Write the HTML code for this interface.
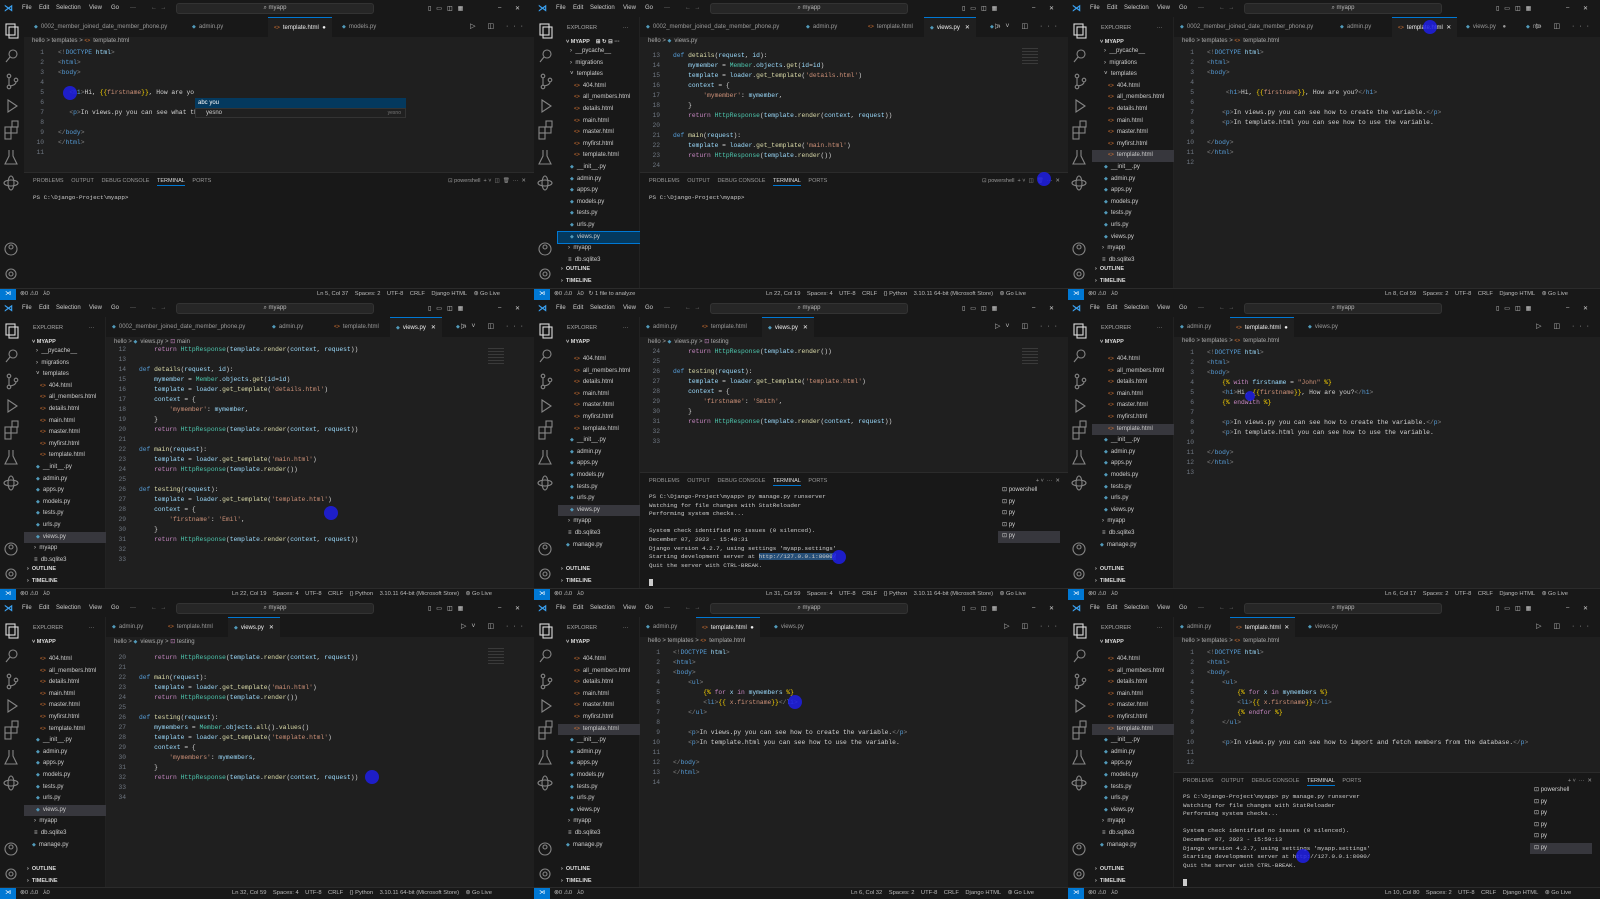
<!DOCTYPE html>
<html><head><meta charset="utf-8">
<style>
*{margin:0;padding:0;box-sizing:border-box}
body{width:1600px;height:899px;background:#111;overflow:hidden;font-family:"Liberation Sans",sans-serif;color:#ccc;position:relative}
.p{position:absolute;overflow:hidden;background:#1f1f1f;width:534px;height:300px}
.tb{position:absolute;left:0;top:0;right:0;height:17px;background:#181818;font-size:6px;color:#ccc}
.tb span{position:absolute;top:5px}
.lg{left:4px;color:#3aa0f0;font-size:9px;top:3px!important;font-weight:bold}
.sr{position:absolute;left:176px;width:198px;top:3px;height:11px;background:#262626;border:1px solid #333;border-radius:3px;text-align:center;font-size:6px;line-height:9px;color:#bbb}
.ab{position:absolute;left:0;top:17px;width:24px;bottom:12px;background:#181818}
.ex{position:absolute;left:24px;top:17px;width:82px;bottom:12px;background:#181818;font-size:6px;color:#ccc;border-right:1px solid #222}
.ex .h{position:absolute;left:9px;top:8px;font-size:5.5px;color:#aaa}
.ex .m{position:absolute;left:8px;top:22px;font-size:5.5px;font-weight:bold;color:#ddd}
.ex .ol{position:absolute;left:3px;font-size:5.5px;font-weight:bold;color:#ddd}
.el{position:absolute;left:0;width:82px}
.el div{height:11.6px;line-height:11.6px;white-space:nowrap;font-size:6px}
.el .sel{background:#37373d}
.el .selb{background:#04395e;outline:1px solid #0078d4}
.hi{color:#e37933;font-size:5px;margin-right:3px}
.py{color:#519aba;font-size:5px;margin-right:3px}
.tabs{position:absolute;top:17px;right:0;height:20px;background:#181818;font-size:6px;color:#999;white-space:nowrap}
.tab{position:absolute;top:0;height:20px;line-height:20px;padding:0 6px}
.tab.act{background:#1f1f1f;color:#eee;border-top:1px solid #0078d4}
.bc{position:absolute;top:38px;font-size:6px;color:#aaa;white-space:nowrap}
pre{font-family:"Liberation Mono",monospace;font-size:6.3px;line-height:10px;position:absolute;white-space:pre;color:#d4d4d4}
pre.n{color:#6e7681;text-align:right;width:20px}
.k{color:#569cd6}.f{color:#dcdcaa}.s{color:#ce9178}.v{color:#9cdcfe}.c{color:#4ec9b0}.g{color:#808080}.y{color:#ffd700}.q{color:#c586c0}
.term{position:absolute;right:0;top:172px;bottom:12px;background:#181818;border-top:1px solid #2b2b2b}
.tt{position:absolute;top:5px;font-size:5.5px;color:#999;white-space:nowrap}
.tt b{font-weight:normal;color:#ddd;border-bottom:1px solid #0078d4;padding-bottom:1px}
pre.tm{font-size:5.9px;line-height:8.6px;color:#ccc}
.tl{position:absolute;right:8px;font-size:6px;color:#ccc;width:62px}
.tl div{height:11.5px;line-height:11.5px;padding-left:4px}
.st{position:absolute;left:0;right:0;bottom:0;height:12px;background:#181818;border-top:1px solid #2b2b2b;font-size:5.8px;color:#bbb;white-space:nowrap}
.st span{position:absolute;top:2px}
.st .rm{left:0;top:0;width:16px;height:12px;background:#0078d4;color:#fff;text-align:center;line-height:11px}
.dot{position:absolute;width:14px;height:14px;border-radius:50%;background:rgba(30,30,230,.85)}
.mini{position:absolute;width:16px;height:18px;background:repeating-linear-gradient(#555 0 1px,transparent 1px 3px);opacity:.5}
.rt{position:absolute;top:5px;right:6px;font-size:7px;color:#bbb;letter-spacing:5px}
</style></head><body>

<!-- ===== PANEL 1 ===== -->
<div class="p" style="left:0;top:0">
 <div class="tb"><span class="lg">⋊</span><span style="left:22px">File</span><span style="left:39px">Edit</span><span style="left:56px">Selection</span><span style="left:89px">View</span><span style="left:111px">Go</span><span style="left:130px">···</span><span style="left:151px;color:#777">←&nbsp; →</span><div class="sr">⌕ myapp</div><span style="left:428px;letter-spacing:5px">▯▭◫▦</span><span style="left:498px">–</span><span style="left:515px">✕</span></div>
 <div class="ab"><svg width="24" height="271" fill="none" stroke="#858585" stroke-width="1.1"><rect x="6" y="7" width="9" height="11" stroke="#ddd"/><rect x="9" y="10" width="9" height="11" stroke="#ddd"/><circle cx="13" cy="37" r="4"/><path d="M10 40 L6 45"/><circle cx="9" cy="59" r="1.8"/><circle cx="9" cy="70" r="1.8"/><circle cx="16" cy="63" r="1.8"/><path d="M9 61V68M16 65Q16 68 10 69"/><path d="M8 83 L17 89 L8 95Z"/><rect x="5" y="110" width="6" height="6"/><rect x="11" y="110" width="6" height="6"/><rect x="5" y="116" width="6" height="6"/><rect x="12" y="104" width="6" height="6"/><path d="M9 133 V139 L5 147 H17 L13 139 V133"/><ellipse cx="11" cy="166" rx="7" ry="3"/><ellipse cx="11" cy="166" rx="3" ry="7"/><circle cx="11" cy="232" r="6"/><circle cx="11" cy="230" r="2"/><circle cx="11" cy="257" r="5"/><circle cx="11" cy="257" r="2"/></svg></div>
 <div class="tabs" style="left:24px"><div class="tab" style="left:4px"><span class="py">◆</span>0002_member_joined_date_member_phone.py</div><div class="tab" style="left:162px"><span class="py">◆</span>admin.py</div><div class="tab act" style="left:244px"><span class="hi">&lt;&gt;</span>template.html&nbsp; ●</div><div class="tab" style="left:312px"><span class="py">◆</span>models.py</div><div class="rt">▷ ◫ ···</div></div>
 <div class="bc" style="left:32px">hello &gt; templates &gt; <span class="hi">&lt;&gt;</span>template.html</div>
 <pre class="n" style="left:24px;top:48px">1
2
3
4
5
6
7
8
9
10
11</pre>
 <pre style="left:58px;top:48px"><span class="g">&lt;!</span><span class="k">DOCTYPE</span> <span class="v">html</span><span class="g">&gt;</span>
<span class="g">&lt;</span><span class="k">html</span><span class="g">&gt;</span>
<span class="g">&lt;</span><span class="k">body</span><span class="g">&gt;</span>

   <span class="g">&lt;</span><span class="k">h1</span><span class="g">&gt;</span>Hi, <span class="y">{{</span><span class="s">firstname</span><span class="y">}}</span>, How are yo

   <span class="g">&lt;</span><span class="k">p</span><span class="g">&gt;</span>In views.py you can see what th

<span class="g">&lt;/</span><span class="k">body</span><span class="g">&gt;</span>
<span class="g">&lt;/</span><span class="k">html</span><span class="g">&gt;</span></pre>
 <div style="position:absolute;left:195px;top:98px;width:211px;height:10px;background:#04395e;font-size:6px;line-height:10px;padding-left:3px;color:#fff">abc you</div>
 <div style="position:absolute;left:195px;top:108px;width:211px;height:10px;background:#202020;border:1px solid #333;font-size:6px;line-height:8px;padding-left:10px;color:#ccc">yesno<span style="position:absolute;right:4px;color:#777;font-size:5px">yesno</span></div>
 <div class="dot" style="left:63px;top:86px"></div>
 <div class="term" style="left:24px">
  <div class="tt" style="left:9px">PROBLEMS&nbsp;&nbsp;&nbsp;&nbsp; OUTPUT&nbsp;&nbsp;&nbsp;&nbsp; DEBUG CONSOLE&nbsp;&nbsp;&nbsp;&nbsp; <b>TERMINAL</b>&nbsp;&nbsp;&nbsp;&nbsp; PORTS</div>
  <div class="tt" style="right:8px">⊡ powershell&nbsp; + ˅&nbsp; ◫&nbsp; 🗑&nbsp; ···&nbsp; ✕</div>
  <pre class="tm" style="left:9px;top:21px">PS C:\Django-Project\myapp&gt;</pre>
 </div>
 <div class="st"><span class="rm">⋊</span><span style="left:20px">⊗0 ⚠0&nbsp;&nbsp; ⅄0</span><span style="left:317px">Ln 5, Col 37&nbsp;&nbsp;&nbsp; Spaces: 2&nbsp;&nbsp;&nbsp; UTF-8&nbsp;&nbsp;&nbsp; CRLF&nbsp;&nbsp;&nbsp; Django HTML&nbsp;&nbsp;&nbsp; ⊛ Go Live</span></div>
</div>

<!-- ===== PANEL 2 ===== -->
<div class="p" style="left:534px;top:0">
 <div class="tb"><span class="lg">⋊</span><span style="left:22px">File</span><span style="left:39px">Edit</span><span style="left:56px">Selection</span><span style="left:89px">View</span><span style="left:111px">Go</span><span style="left:130px">···</span><span style="left:151px;color:#777">←&nbsp; →</span><div class="sr">⌕ myapp</div><span style="left:428px;letter-spacing:5px">▯▭◫▦</span><span style="left:498px">–</span><span style="left:515px">✕</span></div>
 <div class="ab"><svg width="24" height="271" fill="none" stroke="#858585" stroke-width="1.1"><rect x="6" y="7" width="9" height="11" stroke="#ddd"/><rect x="9" y="10" width="9" height="11" stroke="#ddd"/><circle cx="13" cy="37" r="4"/><path d="M10 40 L6 45"/><circle cx="9" cy="59" r="1.8"/><circle cx="9" cy="70" r="1.8"/><circle cx="16" cy="63" r="1.8"/><path d="M9 61V68M16 65Q16 68 10 69"/><path d="M8 83 L17 89 L8 95Z"/><rect x="5" y="110" width="6" height="6"/><rect x="11" y="110" width="6" height="6"/><rect x="5" y="116" width="6" height="6"/><rect x="12" y="104" width="6" height="6"/><path d="M9 133 V139 L5 147 H17 L13 139 V133"/><ellipse cx="11" cy="166" rx="7" ry="3"/><ellipse cx="11" cy="166" rx="3" ry="7"/><circle cx="11" cy="232" r="6"/><circle cx="11" cy="230" r="2"/><circle cx="11" cy="257" r="5"/><circle cx="11" cy="257" r="2"/></svg></div>
 <div class="ex"><div class="h">EXPLORER&nbsp;&nbsp;&nbsp;&nbsp;&nbsp;&nbsp;&nbsp;&nbsp;&nbsp;&nbsp;&nbsp;&nbsp;&nbsp;&nbsp;&nbsp;&nbsp; ···</div><div class="m">˅ MYAPP&nbsp;&nbsp;&nbsp; ⊞ ↻ ⊟ ···</div>
  <div class="el" style="top:29px"><div style="padding-left:12px">›&nbsp; __pycache__</div><div style="padding-left:12px">›&nbsp; migrations</div><div style="padding-left:12px">˅&nbsp; templates</div><div style="padding-left:16px"><span class="hi">&lt;&gt;</span>404.html</div><div style="padding-left:16px"><span class="hi">&lt;&gt;</span>all_members.html</div><div style="padding-left:16px"><span class="hi">&lt;&gt;</span>details.html</div><div style="padding-left:16px"><span class="hi">&lt;&gt;</span>main.html</div><div style="padding-left:16px"><span class="hi">&lt;&gt;</span>master.html</div><div style="padding-left:16px"><span class="hi">&lt;&gt;</span>myfirst.html</div><div style="padding-left:16px"><span class="hi">&lt;&gt;</span>template.html</div><div style="padding-left:12px"><span class="py">◆</span>__init__.py</div><div style="padding-left:12px"><span class="py">◆</span>admin.py</div><div style="padding-left:12px"><span class="py">◆</span>apps.py</div><div style="padding-left:12px"><span class="py">◆</span>models.py</div><div style="padding-left:12px"><span class="py">◆</span>tests.py</div><div style="padding-left:12px"><span class="py">◆</span>urls.py</div><div class="selb" style="padding-left:12px"><span class="py">◆</span>views.py</div><div style="padding-left:10px">›&nbsp; myapp</div><div style="padding-left:10px">≡&nbsp; db.sqlite3</div></div>
  <div class="ol" style="top:249px">›&nbsp; OUTLINE</div><div class="ol" style="top:261px">›&nbsp; TIMELINE</div></div>
 <div class="tabs" style="left:106px"><div class="tab" style="left:0px"><span class="py">◆</span>0002_member_joined_date_member_phone.py</div><div class="tab" style="left:160px"><span class="py">◆</span>admin.py</div><div class="tab" style="left:222px"><span class="hi">&lt;&gt;</span>template.html</div><div class="tab act" style="left:284px"><span class="py">◆</span>views.py&nbsp;&nbsp; ✕</div><div class="tab" style="left:344px"><span class="py">◆</span>n</div><div class="rt">▷˅ ◫ ···</div></div>
 <div class="bc" style="left:114px">hello &gt; <span class="py">◆</span>views.py</div>
 <pre class="n" style="left:106px;top:51px">13
14
15
16
17
18
19
20
21
22
23
24</pre>
 <pre style="left:139px;top:51px">
<span class="k">def</span> <span class="f">details</span>(<span class="v">request</span>, <span class="v">id</span>):
    <span class="v">mymember</span> = <span class="c">Member</span>.<span class="v">objects</span>.<span class="f">get</span>(<span class="v">id</span>=<span class="v">id</span>)
    <span class="v">template</span> = <span class="v">loader</span>.<span class="f">get_template</span>(<span class="s">'details.html'</span>)
    <span class="v">context</span> = {
        <span class="s">'mymember'</span>: <span class="v">mymember</span>,
    }
    <span class="q">return</span> <span class="c">HttpResponse</span>(<span class="v">template</span>.<span class="f">render</span>(<span class="v">context</span>, <span class="v">request</span>))

<span class="k">def</span> <span class="f">main</span>(<span class="v">request</span>):
    <span class="v">template</span> = <span class="v">loader</span>.<span class="f">get_template</span>(<span class="s">'main.html'</span>)
    <span class="q">return</span> <span class="c">HttpResponse</span>(<span class="v">template</span>.<span class="f">render</span>())</pre>
 <div class="mini" style="left:488px;top:48px"></div>
 <div class="term" style="left:106px">
  <div class="tt" style="left:9px">PROBLEMS&nbsp;&nbsp;&nbsp;&nbsp; OUTPUT&nbsp;&nbsp;&nbsp;&nbsp; DEBUG CONSOLE&nbsp;&nbsp;&nbsp;&nbsp; <b>TERMINAL</b>&nbsp;&nbsp;&nbsp;&nbsp; PORTS</div>
  <div class="tt" style="right:8px">⊡ powershell&nbsp; + ˅&nbsp; ◫&nbsp; 🗑&nbsp; ···&nbsp; ✕</div>
  <pre class="tm" style="left:9px;top:21px">PS C:\Django-Project\myapp&gt;</pre>
 </div>
 <div class="dot" style="left:503px;top:172px"></div>
 <div class="st"><span class="rm">⋊</span><span style="left:20px">⊗0 ⚠0&nbsp;&nbsp; ⅄0&nbsp;&nbsp; ↻ 1 file to analyze</span><span style="left:232px">Ln 22, Col 19&nbsp;&nbsp;&nbsp; Spaces: 4&nbsp;&nbsp;&nbsp; UTF-8&nbsp;&nbsp;&nbsp; CRLF&nbsp;&nbsp;&nbsp; {} Python&nbsp;&nbsp;&nbsp; 3.10.11 64-bit (Microsoft Store)&nbsp;&nbsp;&nbsp; ⊛ Go Live</span></div>
</div>

<!-- ===== PANEL 3 ===== -->
<div class="p" style="left:1068px;top:0;width:532px">
 <div class="tb"><span class="lg">⋊</span><span style="left:22px">File</span><span style="left:39px">Edit</span><span style="left:56px">Selection</span><span style="left:89px">View</span><span style="left:111px">Go</span><span style="left:130px">···</span><span style="left:151px;color:#777">←&nbsp; →</span><div class="sr">⌕ myapp</div><span style="left:428px;letter-spacing:5px">▯▭◫▦</span><span style="left:498px">–</span><span style="left:515px">✕</span></div>
 <div class="ab"><svg width="24" height="271" fill="none" stroke="#858585" stroke-width="1.1"><rect x="6" y="7" width="9" height="11" stroke="#ddd"/><rect x="9" y="10" width="9" height="11" stroke="#ddd"/><circle cx="13" cy="37" r="4"/><path d="M10 40 L6 45"/><circle cx="9" cy="59" r="1.8"/><circle cx="9" cy="70" r="1.8"/><circle cx="16" cy="63" r="1.8"/><path d="M9 61V68M16 65Q16 68 10 69"/><path d="M8 83 L17 89 L8 95Z"/><rect x="5" y="110" width="6" height="6"/><rect x="11" y="110" width="6" height="6"/><rect x="5" y="116" width="6" height="6"/><rect x="12" y="104" width="6" height="6"/><path d="M9 133 V139 L5 147 H17 L13 139 V133"/><ellipse cx="11" cy="166" rx="7" ry="3"/><ellipse cx="11" cy="166" rx="3" ry="7"/><circle cx="11" cy="232" r="6"/><circle cx="11" cy="230" r="2"/><circle cx="11" cy="257" r="5"/><circle cx="11" cy="257" r="2"/></svg></div>
 <div class="ex"><div class="h">EXPLORER&nbsp;&nbsp;&nbsp;&nbsp;&nbsp;&nbsp;&nbsp;&nbsp;&nbsp;&nbsp;&nbsp;&nbsp;&nbsp;&nbsp;&nbsp;&nbsp; ···</div><div class="m">˅ MYAPP</div>
  <div class="el" style="top:29px"><div style="padding-left:12px">›&nbsp; __pycache__</div><div style="padding-left:12px">›&nbsp; migrations</div><div style="padding-left:12px">˅&nbsp; templates</div><div style="padding-left:16px"><span class="hi">&lt;&gt;</span>404.html</div><div style="padding-left:16px"><span class="hi">&lt;&gt;</span>all_members.html</div><div style="padding-left:16px"><span class="hi">&lt;&gt;</span>details.html</div><div style="padding-left:16px"><span class="hi">&lt;&gt;</span>main.html</div><div style="padding-left:16px"><span class="hi">&lt;&gt;</span>master.html</div><div style="padding-left:16px"><span class="hi">&lt;&gt;</span>myfirst.html</div><div class="sel" style="padding-left:16px"><span class="hi">&lt;&gt;</span>template.html</div><div style="padding-left:12px"><span class="py">◆</span>__init__.py</div><div style="padding-left:12px"><span class="py">◆</span>admin.py</div><div style="padding-left:12px"><span class="py">◆</span>apps.py</div><div style="padding-left:12px"><span class="py">◆</span>models.py</div><div style="padding-left:12px"><span class="py">◆</span>tests.py</div><div style="padding-left:12px"><span class="py">◆</span>urls.py</div><div style="padding-left:12px"><span class="py">◆</span>views.py</div><div style="padding-left:10px">›&nbsp; myapp</div><div style="padding-left:10px">≡&nbsp; db.sqlite3</div></div>
  <div class="ol" style="top:249px">›&nbsp; OUTLINE</div><div class="ol" style="top:261px">›&nbsp; TIMELINE</div></div>
 <div class="tabs" style="left:106px"><div class="tab" style="left:0px"><span class="py">◆</span>0002_member_joined_date_member_phone.py</div><div class="tab" style="left:160px"><span class="py">◆</span>admin.py</div><div class="tab act" style="left:218px"><span class="hi">&lt;&gt;</span>template.html&nbsp; ✕</div><div class="tab" style="left:286px"><span class="py">◆</span>views.py&nbsp;&nbsp;&nbsp; ●</div><div class="tab" style="left:346px"><span class="py">◆</span>mo</div><div class="rt">▷ ◫ ···</div></div>
 <div class="bc" style="left:114px">hello &gt; templates &gt; <span class="hi">&lt;&gt;</span>template.html</div>
 <pre class="n" style="left:106px;top:48px">1
2
3
4
5
6
7
8
9
10
11
12</pre>
 <pre style="left:139px;top:48px"><span class="g">&lt;!</span><span class="k">DOCTYPE</span> <span class="v">html</span><span class="g">&gt;</span>
<span class="g">&lt;</span><span class="k">html</span><span class="g">&gt;</span>
<span class="g">&lt;</span><span class="k">body</span><span class="g">&gt;</span>

     <span class="g">&lt;</span><span class="k">h1</span><span class="g">&gt;</span>Hi, <span class="y">{{</span><span class="s">firstname</span><span class="y">}}</span>, How are you?<span class="g">&lt;/</span><span class="k">h1</span><span class="g">&gt;</span>

    <span class="g">&lt;</span><span class="k">p</span><span class="g">&gt;</span>In views.py you can see how to create the variable.<span class="g">&lt;/</span><span class="k">p</span><span class="g">&gt;</span>
    <span class="g">&lt;</span><span class="k">p</span><span class="g">&gt;</span>In template.html you can see how to use the variable.

<span class="g">&lt;/</span><span class="k">body</span><span class="g">&gt;</span>
<span class="g">&lt;/</span><span class="k">html</span><span class="g">&gt;</span>
</pre>
 <div class="dot" style="left:355px;top:20px"></div>
 <div class="st"><span class="rm">⋊</span><span style="left:20px">⊗0 ⚠0&nbsp;&nbsp; ⅄0</span><span style="left:317px">Ln 8, Col 59&nbsp;&nbsp;&nbsp; Spaces: 2&nbsp;&nbsp;&nbsp; UTF-8&nbsp;&nbsp;&nbsp; CRLF&nbsp;&nbsp;&nbsp; Django HTML&nbsp;&nbsp;&nbsp; ⊛ Go Live</span></div>
</div>

<!-- ===== PANEL 4 ===== -->
<div class="p" style="left:0;top:300px">
 <div class="tb"><span class="lg">⋊</span><span style="left:22px">File</span><span style="left:39px">Edit</span><span style="left:56px">Selection</span><span style="left:89px">View</span><span style="left:111px">Go</span><span style="left:130px">···</span><span style="left:151px;color:#777">←&nbsp; →</span><div class="sr">⌕ myapp</div><span style="left:428px;letter-spacing:5px">▯▭◫▦</span><span style="left:498px">–</span><span style="left:515px">✕</span></div>
 <div class="ab"><svg width="24" height="271" fill="none" stroke="#858585" stroke-width="1.1"><rect x="6" y="7" width="9" height="11" stroke="#ddd"/><rect x="9" y="10" width="9" height="11" stroke="#ddd"/><circle cx="13" cy="37" r="4"/><path d="M10 40 L6 45"/><circle cx="9" cy="59" r="1.8"/><circle cx="9" cy="70" r="1.8"/><circle cx="16" cy="63" r="1.8"/><path d="M9 61V68M16 65Q16 68 10 69"/><path d="M8 83 L17 89 L8 95Z"/><rect x="5" y="110" width="6" height="6"/><rect x="11" y="110" width="6" height="6"/><rect x="5" y="116" width="6" height="6"/><rect x="12" y="104" width="6" height="6"/><path d="M9 133 V139 L5 147 H17 L13 139 V133"/><ellipse cx="11" cy="166" rx="7" ry="3"/><ellipse cx="11" cy="166" rx="3" ry="7"/><circle cx="11" cy="232" r="6"/><circle cx="11" cy="230" r="2"/><circle cx="11" cy="257" r="5"/><circle cx="11" cy="257" r="2"/></svg></div>
 <div class="ex"><div class="h">EXPLORER&nbsp;&nbsp;&nbsp;&nbsp;&nbsp;&nbsp;&nbsp;&nbsp;&nbsp;&nbsp;&nbsp;&nbsp;&nbsp;&nbsp;&nbsp;&nbsp; ···</div><div class="m">˅ MYAPP</div>
  <div class="el" style="top:29px"><div style="padding-left:12px">›&nbsp; __pycache__</div><div style="padding-left:12px">›&nbsp; migrations</div><div style="padding-left:12px">˅&nbsp; templates</div><div style="padding-left:16px"><span class="hi">&lt;&gt;</span>404.html</div><div style="padding-left:16px"><span class="hi">&lt;&gt;</span>all_members.html</div><div style="padding-left:16px"><span class="hi">&lt;&gt;</span>details.html</div><div style="padding-left:16px"><span class="hi">&lt;&gt;</span>main.html</div><div style="padding-left:16px"><span class="hi">&lt;&gt;</span>master.html</div><div style="padding-left:16px"><span class="hi">&lt;&gt;</span>myfirst.html</div><div style="padding-left:16px"><span class="hi">&lt;&gt;</span>template.html</div><div style="padding-left:12px"><span class="py">◆</span>__init__.py</div><div style="padding-left:12px"><span class="py">◆</span>admin.py</div><div style="padding-left:12px"><span class="py">◆</span>apps.py</div><div style="padding-left:12px"><span class="py">◆</span>models.py</div><div style="padding-left:12px"><span class="py">◆</span>tests.py</div><div style="padding-left:12px"><span class="py">◆</span>urls.py</div><div class="sel" style="padding-left:12px"><span class="py">◆</span>views.py</div><div style="padding-left:10px">›&nbsp; myapp</div><div style="padding-left:10px">≡&nbsp; db.sqlite3</div></div>
  <div class="ol" style="top:249px">›&nbsp; OUTLINE</div><div class="ol" style="top:261px">›&nbsp; TIMELINE</div></div>
 <div class="tabs" style="left:106px"><div class="tab" style="left:0px"><span class="py">◆</span>0002_member_joined_date_member_phone.py</div><div class="tab" style="left:160px"><span class="py">◆</span>admin.py</div><div class="tab" style="left:222px"><span class="hi">&lt;&gt;</span>template.html</div><div class="tab act" style="left:284px"><span class="py">◆</span>views.py&nbsp;&nbsp; ✕</div><div class="tab" style="left:344px"><span class="py">◆</span>n</div><div class="rt">▷˅ ◫ ···</div></div>
 <div class="bc" style="left:114px">hello &gt; <span class="py">◆</span>views.py &gt; <span class="q">⊡</span> main</div>
 <pre class="n" style="left:106px;top:45px">12
13
14
15
16
17
18
19
20
21
22
23
24
25
26
27
28
29
30
31
32
33</pre>
 <pre style="left:139px;top:45px">    <span class="q">return</span> <span class="c">HttpResponse</span>(<span class="v">template</span>.<span class="f">render</span>(<span class="v">context</span>, <span class="v">request</span>))

<span class="k">def</span> <span class="f">details</span>(<span class="v">request</span>, <span class="v">id</span>):
    <span class="v">mymember</span> = <span class="c">Member</span>.<span class="v">objects</span>.<span class="f">get</span>(<span class="v">id</span>=<span class="v">id</span>)
    <span class="v">template</span> = <span class="v">loader</span>.<span class="f">get_template</span>(<span class="s">'details.html'</span>)
    <span class="v">context</span> = {
        <span class="s">'mymember'</span>: <span class="v">mymember</span>,
    }
    <span class="q">return</span> <span class="c">HttpResponse</span>(<span class="v">template</span>.<span class="f">render</span>(<span class="v">context</span>, <span class="v">request</span>))

<span class="k">def</span> <span class="f">main</span>(<span class="v">request</span>):
    <span class="v">template</span> = <span class="v">loader</span>.<span class="f">get_template</span>(<span class="s">'main.html'</span>)
    <span class="q">return</span> <span class="c">HttpResponse</span>(<span class="v">template</span>.<span class="f">render</span>())

<span class="k">def</span> <span class="f">testing</span>(<span class="v">request</span>):
    <span class="v">template</span> = <span class="v">loader</span>.<span class="f">get_template</span>(<span class="s">'template.html'</span>)
    <span class="v">context</span> = {
        <span class="s">'firstname'</span>: <span class="s">'Emil'</span>,
    }
    <span class="q">return</span> <span class="c">HttpResponse</span>(<span class="v">template</span>.<span class="f">render</span>(<span class="v">context</span>, <span class="v">request</span>))

</pre>
 <div class="mini" style="left:488px;top:48px"></div>
 <div class="dot" style="left:324px;top:206px"></div>
 <div class="st"><span class="rm">⋊</span><span style="left:20px">⊗0 ⚠0&nbsp;&nbsp; ⅄0</span><span style="left:232px">Ln 22, Col 19&nbsp;&nbsp;&nbsp; Spaces: 4&nbsp;&nbsp;&nbsp; UTF-8&nbsp;&nbsp;&nbsp; CRLF&nbsp;&nbsp;&nbsp; {} Python&nbsp;&nbsp;&nbsp; 3.10.11 64-bit (Microsoft Store)&nbsp;&nbsp;&nbsp; ⊛ Go Live</span></div>
</div>

<!-- ===== PANEL 5 ===== -->
<div class="p" style="left:534px;top:300px">
 <div class="tb"><span class="lg">⋊</span><span style="left:22px">File</span><span style="left:39px">Edit</span><span style="left:56px">Selection</span><span style="left:89px">View</span><span style="left:111px">Go</span><span style="left:130px">···</span><span style="left:151px;color:#777">←&nbsp; →</span><div class="sr">⌕ myapp</div><span style="left:428px;letter-spacing:5px">▯▭◫▦</span><span style="left:498px">–</span><span style="left:515px">✕</span></div>
 <div class="ab"><svg width="24" height="271" fill="none" stroke="#858585" stroke-width="1.1"><rect x="6" y="7" width="9" height="11" stroke="#ddd"/><rect x="9" y="10" width="9" height="11" stroke="#ddd"/><circle cx="13" cy="37" r="4"/><path d="M10 40 L6 45"/><circle cx="9" cy="59" r="1.8"/><circle cx="9" cy="70" r="1.8"/><circle cx="16" cy="63" r="1.8"/><path d="M9 61V68M16 65Q16 68 10 69"/><path d="M8 83 L17 89 L8 95Z"/><rect x="5" y="110" width="6" height="6"/><rect x="11" y="110" width="6" height="6"/><rect x="5" y="116" width="6" height="6"/><rect x="12" y="104" width="6" height="6"/><path d="M9 133 V139 L5 147 H17 L13 139 V133"/><ellipse cx="11" cy="166" rx="7" ry="3"/><ellipse cx="11" cy="166" rx="3" ry="7"/><circle cx="11" cy="232" r="6"/><circle cx="11" cy="230" r="2"/><circle cx="11" cy="257" r="5"/><circle cx="11" cy="257" r="2"/></svg></div>
 <div class="ex"><div class="h">EXPLORER&nbsp;&nbsp;&nbsp;&nbsp;&nbsp;&nbsp;&nbsp;&nbsp;&nbsp;&nbsp;&nbsp;&nbsp;&nbsp;&nbsp;&nbsp;&nbsp; ···</div><div class="m">˅ MYAPP</div>
  <div class="el" style="top:37px"><div style="padding-left:16px"><span class="hi">&lt;&gt;</span>404.html</div><div style="padding-left:16px"><span class="hi">&lt;&gt;</span>all_members.html</div><div style="padding-left:16px"><span class="hi">&lt;&gt;</span>details.html</div><div style="padding-left:16px"><span class="hi">&lt;&gt;</span>main.html</div><div style="padding-left:16px"><span class="hi">&lt;&gt;</span>master.html</div><div style="padding-left:16px"><span class="hi">&lt;&gt;</span>myfirst.html</div><div style="padding-left:16px"><span class="hi">&lt;&gt;</span>template.html</div><div style="padding-left:12px"><span class="py">◆</span>__init__.py</div><div style="padding-left:12px"><span class="py">◆</span>admin.py</div><div style="padding-left:12px"><span class="py">◆</span>apps.py</div><div style="padding-left:12px"><span class="py">◆</span>models.py</div><div style="padding-left:12px"><span class="py">◆</span>tests.py</div><div style="padding-left:12px"><span class="py">◆</span>urls.py</div><div class="sel" style="padding-left:12px"><span class="py">◆</span>views.py</div><div style="padding-left:10px">›&nbsp; myapp</div><div style="padding-left:10px">≡&nbsp; db.sqlite3</div><div style="padding-left:8px"><span class="py">◆</span>manage.py</div></div>
  <div class="ol" style="top:249px">›&nbsp; OUTLINE</div><div class="ol" style="top:261px">›&nbsp; TIMELINE</div></div>
 <div class="tabs" style="left:106px"><div class="tab" style="left:0px"><span class="py">◆</span>admin.py</div><div class="tab" style="left:56px"><span class="hi">&lt;&gt;</span>template.html</div><div class="tab act" style="left:122px"><span class="py">◆</span>views.py&nbsp;&nbsp; ✕</div><div class="rt">▷˅ ◫ ···</div></div>
 <div class="bc" style="left:114px">hello &gt; <span class="py">◆</span>views.py &gt; <span class="q">⊡</span> testing</div>
 <pre class="n" style="left:106px;top:47px">24
25
26
27
28
29
30
31
32
33</pre>
 <pre style="left:139px;top:47px">    <span class="q">return</span> <span class="c">HttpResponse</span>(<span class="v">template</span>.<span class="f">render</span>())

<span class="k">def</span> <span class="f">testing</span>(<span class="v">request</span>):
    <span class="v">template</span> = <span class="v">loader</span>.<span class="f">get_template</span>(<span class="s">'template.html'</span>)
    <span class="v">context</span> = {
        <span class="s">'firstname'</span>: <span class="s">'Smith'</span>,
    }
    <span class="q">return</span> <span class="c">HttpResponse</span>(<span class="v">template</span>.<span class="f">render</span>(<span class="v">context</span>, <span class="v">request</span>))

</pre>
 <div class="mini" style="left:488px;top:48px"></div>
 <div class="term" style="left:106px">
  <div class="tt" style="left:9px">PROBLEMS&nbsp;&nbsp;&nbsp;&nbsp; OUTPUT&nbsp;&nbsp;&nbsp;&nbsp; DEBUG CONSOLE&nbsp;&nbsp;&nbsp;&nbsp; <b>TERMINAL</b>&nbsp;&nbsp;&nbsp;&nbsp; PORTS</div>
  <div class="tt" style="right:8px">+ ˅&nbsp; ···&nbsp; ✕</div>
  <pre class="tm" style="left:9px;top:20px">PS C:\Django-Project\myapp&gt; py manage.py runserver
Watching for file changes with StatReloader
Performing system checks...

System check identified no issues (0 silenced).
December 07, 2023 - 15:48:31
Django version 4.2.7, using settings 'myapp.settings'
Starting development server at <span style="background:#264f78">http://127.0.0.1:8000/</span>
Quit the server with CTRL-BREAK.

<span style="background:#ccc">&nbsp;</span></pre>
  <div class="tl" style="top:12px"><div>⊡ powershell</div><div>⊡ py</div><div>⊡ py</div><div>⊡ py</div><div style="background:#37373d">⊡ py</div></div>
 </div>
 <div class="dot" style="left:298px;top:250px"></div>
 <div class="st"><span class="rm">⋊</span><span style="left:20px">⊗0 ⚠0&nbsp;&nbsp; ⅄0</span><span style="left:232px">Ln 31, Col 59&nbsp;&nbsp;&nbsp; Spaces: 4&nbsp;&nbsp;&nbsp; UTF-8&nbsp;&nbsp;&nbsp; CRLF&nbsp;&nbsp;&nbsp; {} Python&nbsp;&nbsp;&nbsp; 3.10.11 64-bit (Microsoft Store)&nbsp;&nbsp;&nbsp; ⊛ Go Live</span></div>
</div>

<!-- ===== PANEL 6 ===== -->
<div class="p" style="left:1068px;top:300px;width:532px">
 <div class="tb"><span class="lg">⋊</span><span style="left:22px">File</span><span style="left:39px">Edit</span><span style="left:56px">Selection</span><span style="left:89px">View</span><span style="left:111px">Go</span><span style="left:130px">···</span><span style="left:151px;color:#777">←&nbsp; →</span><div class="sr">⌕ myapp</div><span style="left:428px;letter-spacing:5px">▯▭◫▦</span><span style="left:498px">–</span><span style="left:515px">✕</span></div>
 <div class="ab"><svg width="24" height="271" fill="none" stroke="#858585" stroke-width="1.1"><rect x="6" y="7" width="9" height="11" stroke="#ddd"/><rect x="9" y="10" width="9" height="11" stroke="#ddd"/><circle cx="13" cy="37" r="4"/><path d="M10 40 L6 45"/><circle cx="9" cy="59" r="1.8"/><circle cx="9" cy="70" r="1.8"/><circle cx="16" cy="63" r="1.8"/><path d="M9 61V68M16 65Q16 68 10 69"/><path d="M8 83 L17 89 L8 95Z"/><rect x="5" y="110" width="6" height="6"/><rect x="11" y="110" width="6" height="6"/><rect x="5" y="116" width="6" height="6"/><rect x="12" y="104" width="6" height="6"/><path d="M9 133 V139 L5 147 H17 L13 139 V133"/><ellipse cx="11" cy="166" rx="7" ry="3"/><ellipse cx="11" cy="166" rx="3" ry="7"/><circle cx="11" cy="232" r="6"/><circle cx="11" cy="230" r="2"/><circle cx="11" cy="257" r="5"/><circle cx="11" cy="257" r="2"/></svg></div>
 <div class="ex"><div class="h">EXPLORER&nbsp;&nbsp;&nbsp;&nbsp;&nbsp;&nbsp;&nbsp;&nbsp;&nbsp;&nbsp;&nbsp;&nbsp;&nbsp;&nbsp;&nbsp;&nbsp; ···</div><div class="m">˅ MYAPP</div>
  <div class="el" style="top:37px"><div style="padding-left:16px"><span class="hi">&lt;&gt;</span>404.html</div><div style="padding-left:16px"><span class="hi">&lt;&gt;</span>all_members.html</div><div style="padding-left:16px"><span class="hi">&lt;&gt;</span>details.html</div><div style="padding-left:16px"><span class="hi">&lt;&gt;</span>main.html</div><div style="padding-left:16px"><span class="hi">&lt;&gt;</span>master.html</div><div style="padding-left:16px"><span class="hi">&lt;&gt;</span>myfirst.html</div><div class="sel" style="padding-left:16px"><span class="hi">&lt;&gt;</span>template.html</div><div style="padding-left:12px"><span class="py">◆</span>__init__.py</div><div style="padding-left:12px"><span class="py">◆</span>admin.py</div><div style="padding-left:12px"><span class="py">◆</span>apps.py</div><div style="padding-left:12px"><span class="py">◆</span>models.py</div><div style="padding-left:12px"><span class="py">◆</span>tests.py</div><div style="padding-left:12px"><span class="py">◆</span>urls.py</div><div style="padding-left:12px"><span class="py">◆</span>views.py</div><div style="padding-left:10px">›&nbsp; myapp</div><div style="padding-left:10px">≡&nbsp; db.sqlite3</div><div style="padding-left:8px"><span class="py">◆</span>manage.py</div></div>
  <div class="ol" style="top:249px">›&nbsp; OUTLINE</div><div class="ol" style="top:261px">›&nbsp; TIMELINE</div></div>
 <div class="tabs" style="left:106px"><div class="tab" style="left:0px"><span class="py">◆</span>admin.py</div><div class="tab act" style="left:56px"><span class="hi">&lt;&gt;</span>template.html&nbsp; ●</div><div class="tab" style="left:128px"><span class="py">◆</span>views.py</div><div class="rt">▷ ◫ ···</div></div>
 <div class="bc" style="left:114px">hello &gt; templates &gt; <span class="hi">&lt;&gt;</span>template.html</div>
 <pre class="n" style="left:106px;top:48px">1
2
3
4
5
6
7
8
9
10
11
12
13</pre>
 <pre style="left:139px;top:48px"><span class="g">&lt;!</span><span class="k">DOCTYPE</span> <span class="v">html</span><span class="g">&gt;</span>
<span class="g">&lt;</span><span class="k">html</span><span class="g">&gt;</span>
<span class="g">&lt;</span><span class="k">body</span><span class="g">&gt;</span>
    <span class="y">{%</span> <span class="q">with</span> <span class="v">firstname</span> = <span class="s">"John"</span> <span class="y">%}</span>
    <span class="g">&lt;</span><span class="k">h1</span><span class="g">&gt;</span>Hi, <span class="y">{{</span><span class="s">firstname</span><span class="y">}}</span>, How are you?<span class="g">&lt;/</span><span class="k">h1</span><span class="g">&gt;</span>
    <span class="y">{%</span> <span class="q">endwith</span> <span class="y">%}</span>

    <span class="g">&lt;</span><span class="k">p</span><span class="g">&gt;</span>In views.py you can see how to create the variable.<span class="g">&lt;/</span><span class="k">p</span><span class="g">&gt;</span>
    <span class="g">&lt;</span><span class="k">p</span><span class="g">&gt;</span>In template.html you can see how to use the variable.

<span class="g">&lt;/</span><span class="k">body</span><span class="g">&gt;</span>
<span class="g">&lt;/</span><span class="k">html</span><span class="g">&gt;</span>
</pre>
 <div class="dot" style="left:177px;top:91px;width:10px;height:10px"></div>
 <div class="st"><span class="rm">⋊</span><span style="left:20px">⊗0 ⚠0&nbsp;&nbsp; ⅄0</span><span style="left:317px">Ln 6, Col 17&nbsp;&nbsp;&nbsp; Spaces: 2&nbsp;&nbsp;&nbsp; UTF-8&nbsp;&nbsp;&nbsp; CRLF&nbsp;&nbsp;&nbsp; Django HTML&nbsp;&nbsp;&nbsp; ⊛ Go Live</span></div>
</div>

<!-- ===== PANEL 7 ===== -->
<div class="p" style="left:0;top:600px;height:299px">
 <div class="tb"><span class="lg">⋊</span><span style="left:22px">File</span><span style="left:39px">Edit</span><span style="left:56px">Selection</span><span style="left:89px">View</span><span style="left:111px">Go</span><span style="left:130px">···</span><span style="left:151px;color:#777">←&nbsp; →</span><div class="sr">⌕ myapp</div><span style="left:428px;letter-spacing:5px">▯▭◫▦</span><span style="left:498px">–</span><span style="left:515px">✕</span></div>
 <div class="ab"><svg width="24" height="271" fill="none" stroke="#858585" stroke-width="1.1"><rect x="6" y="7" width="9" height="11" stroke="#ddd"/><rect x="9" y="10" width="9" height="11" stroke="#ddd"/><circle cx="13" cy="37" r="4"/><path d="M10 40 L6 45"/><circle cx="9" cy="59" r="1.8"/><circle cx="9" cy="70" r="1.8"/><circle cx="16" cy="63" r="1.8"/><path d="M9 61V68M16 65Q16 68 10 69"/><path d="M8 83 L17 89 L8 95Z"/><rect x="5" y="110" width="6" height="6"/><rect x="11" y="110" width="6" height="6"/><rect x="5" y="116" width="6" height="6"/><rect x="12" y="104" width="6" height="6"/><path d="M9 133 V139 L5 147 H17 L13 139 V133"/><ellipse cx="11" cy="166" rx="7" ry="3"/><ellipse cx="11" cy="166" rx="3" ry="7"/><circle cx="11" cy="232" r="6"/><circle cx="11" cy="230" r="2"/><circle cx="11" cy="257" r="5"/><circle cx="11" cy="257" r="2"/></svg></div>
 <div class="ex"><div class="h">EXPLORER&nbsp;&nbsp;&nbsp;&nbsp;&nbsp;&nbsp;&nbsp;&nbsp;&nbsp;&nbsp;&nbsp;&nbsp;&nbsp;&nbsp;&nbsp;&nbsp; ···</div><div class="m">˅ MYAPP</div>
  <div class="el" style="top:37px"><div style="padding-left:16px"><span class="hi">&lt;&gt;</span>404.html</div><div style="padding-left:16px"><span class="hi">&lt;&gt;</span>all_members.html</div><div style="padding-left:16px"><span class="hi">&lt;&gt;</span>details.html</div><div style="padding-left:16px"><span class="hi">&lt;&gt;</span>main.html</div><div style="padding-left:16px"><span class="hi">&lt;&gt;</span>master.html</div><div style="padding-left:16px"><span class="hi">&lt;&gt;</span>myfirst.html</div><div style="padding-left:16px"><span class="hi">&lt;&gt;</span>template.html</div><div style="padding-left:12px"><span class="py">◆</span>__init__.py</div><div style="padding-left:12px"><span class="py">◆</span>admin.py</div><div style="padding-left:12px"><span class="py">◆</span>apps.py</div><div style="padding-left:12px"><span class="py">◆</span>models.py</div><div style="padding-left:12px"><span class="py">◆</span>tests.py</div><div style="padding-left:12px"><span class="py">◆</span>urls.py</div><div class="sel" style="padding-left:12px"><span class="py">◆</span>views.py</div><div style="padding-left:10px">›&nbsp; myapp</div><div style="padding-left:10px">≡&nbsp; db.sqlite3</div><div style="padding-left:8px"><span class="py">◆</span>manage.py</div></div>
  <div class="ol" style="top:249px">›&nbsp; OUTLINE</div><div class="ol" style="top:261px">›&nbsp; TIMELINE</div></div>
 <div class="tabs" style="left:106px"><div class="tab" style="left:0px"><span class="py">◆</span>admin.py</div><div class="tab" style="left:56px"><span class="hi">&lt;&gt;</span>template.html</div><div class="tab act" style="left:122px"><span class="py">◆</span>views.py&nbsp;&nbsp; ✕</div><div class="rt">▷˅ ◫ ···</div></div>
 <div class="bc" style="left:114px">hello &gt; <span class="py">◆</span>views.py &gt; <span class="q">⊡</span> testing</div>
 <pre class="n" style="left:106px;top:53px">20
21
22
23
24
25
26
27
28
29
30
31
32
33
34</pre>
 <pre style="left:139px;top:53px">    <span class="q">return</span> <span class="c">HttpResponse</span>(<span class="v">template</span>.<span class="f">render</span>(<span class="v">context</span>, <span class="v">request</span>))

<span class="k">def</span> <span class="f">main</span>(<span class="v">request</span>):
    <span class="v">template</span> = <span class="v">loader</span>.<span class="f">get_template</span>(<span class="s">'main.html'</span>)
    <span class="q">return</span> <span class="c">HttpResponse</span>(<span class="v">template</span>.<span class="f">render</span>())

<span class="k">def</span> <span class="f">testing</span>(<span class="v">request</span>):
    <span class="v">mymembers</span> = <span class="c">Member</span>.<span class="v">objects</span>.<span class="f">all</span>().<span class="f">values</span>()
    <span class="v">template</span> = <span class="v">loader</span>.<span class="f">get_template</span>(<span class="s">'template.html'</span>)
    <span class="v">context</span> = {
        <span class="s">'mymembers'</span>: <span class="v">mymembers</span>,
    }
    <span class="q">return</span> <span class="c">HttpResponse</span>(<span class="v">template</span>.<span class="f">render</span>(<span class="v">context</span>, <span class="v">request</span>))

</pre>
 <div class="mini" style="left:488px;top:48px"></div>
 <div class="dot" style="left:365px;top:170px"></div>
 <div class="st"><span class="rm">⋊</span><span style="left:20px">⊗0 ⚠0&nbsp;&nbsp; ⅄0</span><span style="left:232px">Ln 32, Col 59&nbsp;&nbsp;&nbsp; Spaces: 4&nbsp;&nbsp;&nbsp; UTF-8&nbsp;&nbsp;&nbsp; CRLF&nbsp;&nbsp;&nbsp; {} Python&nbsp;&nbsp;&nbsp; 3.10.11 64-bit (Microsoft Store)&nbsp;&nbsp;&nbsp; ⊛ Go Live</span></div>
</div>

<!-- ===== PANEL 8 ===== -->
<div class="p" style="left:534px;top:600px;height:299px">
 <div class="tb"><span class="lg">⋊</span><span style="left:22px">File</span><span style="left:39px">Edit</span><span style="left:56px">Selection</span><span style="left:89px">View</span><span style="left:111px">Go</span><span style="left:130px">···</span><span style="left:151px;color:#777">←&nbsp; →</span><div class="sr">⌕ myapp</div><span style="left:428px;letter-spacing:5px">▯▭◫▦</span><span style="left:498px">–</span><span style="left:515px">✕</span></div>
 <div class="ab"><svg width="24" height="271" fill="none" stroke="#858585" stroke-width="1.1"><rect x="6" y="7" width="9" height="11" stroke="#ddd"/><rect x="9" y="10" width="9" height="11" stroke="#ddd"/><circle cx="13" cy="37" r="4"/><path d="M10 40 L6 45"/><circle cx="9" cy="59" r="1.8"/><circle cx="9" cy="70" r="1.8"/><circle cx="16" cy="63" r="1.8"/><path d="M9 61V68M16 65Q16 68 10 69"/><path d="M8 83 L17 89 L8 95Z"/><rect x="5" y="110" width="6" height="6"/><rect x="11" y="110" width="6" height="6"/><rect x="5" y="116" width="6" height="6"/><rect x="12" y="104" width="6" height="6"/><path d="M9 133 V139 L5 147 H17 L13 139 V133"/><ellipse cx="11" cy="166" rx="7" ry="3"/><ellipse cx="11" cy="166" rx="3" ry="7"/><circle cx="11" cy="232" r="6"/><circle cx="11" cy="230" r="2"/><circle cx="11" cy="257" r="5"/><circle cx="11" cy="257" r="2"/></svg></div>
 <div class="ex"><div class="h">EXPLORER&nbsp;&nbsp;&nbsp;&nbsp;&nbsp;&nbsp;&nbsp;&nbsp;&nbsp;&nbsp;&nbsp;&nbsp;&nbsp;&nbsp;&nbsp;&nbsp; ···</div><div class="m">˅ MYAPP</div>
  <div class="el" style="top:37px"><div style="padding-left:16px"><span class="hi">&lt;&gt;</span>404.html</div><div style="padding-left:16px"><span class="hi">&lt;&gt;</span>all_members.html</div><div style="padding-left:16px"><span class="hi">&lt;&gt;</span>details.html</div><div style="padding-left:16px"><span class="hi">&lt;&gt;</span>main.html</div><div style="padding-left:16px"><span class="hi">&lt;&gt;</span>master.html</div><div style="padding-left:16px"><span class="hi">&lt;&gt;</span>myfirst.html</div><div class="sel" style="padding-left:16px"><span class="hi">&lt;&gt;</span>template.html</div><div style="padding-left:12px"><span class="py">◆</span>__init__.py</div><div style="padding-left:12px"><span class="py">◆</span>admin.py</div><div style="padding-left:12px"><span class="py">◆</span>apps.py</div><div style="padding-left:12px"><span class="py">◆</span>models.py</div><div style="padding-left:12px"><span class="py">◆</span>tests.py</div><div style="padding-left:12px"><span class="py">◆</span>urls.py</div><div style="padding-left:12px"><span class="py">◆</span>views.py</div><div style="padding-left:10px">›&nbsp; myapp</div><div style="padding-left:10px">≡&nbsp; db.sqlite3</div><div style="padding-left:8px"><span class="py">◆</span>manage.py</div></div>
  <div class="ol" style="top:249px">›&nbsp; OUTLINE</div><div class="ol" style="top:261px">›&nbsp; TIMELINE</div></div>
 <div class="tabs" style="left:106px"><div class="tab" style="left:0px"><span class="py">◆</span>admin.py</div><div class="tab act" style="left:56px"><span class="hi">&lt;&gt;</span>template.html&nbsp; ●</div><div class="tab" style="left:128px"><span class="py">◆</span>views.py</div><div class="rt">▷ ◫ ···</div></div>
 <div class="bc" style="left:114px">hello &gt; templates &gt; <span class="hi">&lt;&gt;</span>template.html</div>
 <pre class="n" style="left:106px;top:48px">1
2
3
4
5
6
7
8
9
10
11
12
13
14</pre>
 <pre style="left:139px;top:48px"><span class="g">&lt;!</span><span class="k">DOCTYPE</span> <span class="v">html</span><span class="g">&gt;</span>
<span class="g">&lt;</span><span class="k">html</span><span class="g">&gt;</span>
<span class="g">&lt;</span><span class="k">body</span><span class="g">&gt;</span>
    <span class="g">&lt;</span><span class="k">ul</span><span class="g">&gt;</span>
        <span class="y">{%</span> <span class="q">for</span> <span class="v">x</span> <span class="q">in</span> <span class="v">mymembers</span> <span class="y">%}</span>
        <span class="g">&lt;</span><span class="k">li</span><span class="g">&gt;</span><span class="y">{{</span> <span class="s">x.firstname</span><span class="y">}}</span><span class="g">&lt;/</span><span class="k">li</span><span class="g">&gt;</span>
    <span class="g">&lt;/</span><span class="k">ul</span><span class="g">&gt;</span>

    <span class="g">&lt;</span><span class="k">p</span><span class="g">&gt;</span>In views.py you can see how to create the variable.<span class="g">&lt;/</span><span class="k">p</span><span class="g">&gt;</span>
    <span class="g">&lt;</span><span class="k">p</span><span class="g">&gt;</span>In template.html you can see how to use the variable.

<span class="g">&lt;/</span><span class="k">body</span><span class="g">&gt;</span>
<span class="g">&lt;/</span><span class="k">html</span><span class="g">&gt;</span>
</pre>
 <div class="dot" style="left:254px;top:95px"></div>
 <div class="st"><span class="rm">⋊</span><span style="left:20px">⊗0 ⚠0&nbsp;&nbsp; ⅄0</span><span style="left:317px">Ln 6, Col 32&nbsp;&nbsp;&nbsp; Spaces: 2&nbsp;&nbsp;&nbsp; UTF-8&nbsp;&nbsp;&nbsp; CRLF&nbsp;&nbsp;&nbsp; Django HTML&nbsp;&nbsp;&nbsp; ⊛ Go Live</span></div>
</div>

<!-- ===== PANEL 9 ===== -->
<div class="p" style="left:1068px;top:600px;width:532px;height:299px">
 <div class="tb"><span class="lg">⋊</span><span style="left:22px">File</span><span style="left:39px">Edit</span><span style="left:56px">Selection</span><span style="left:89px">View</span><span style="left:111px">Go</span><span style="left:130px">···</span><span style="left:151px;color:#777">←&nbsp; →</span><div class="sr">⌕ myapp</div><span style="left:428px;letter-spacing:5px">▯▭◫▦</span><span style="left:498px">–</span><span style="left:515px">✕</span></div>
 <div class="ab"><svg width="24" height="271" fill="none" stroke="#858585" stroke-width="1.1"><rect x="6" y="7" width="9" height="11" stroke="#ddd"/><rect x="9" y="10" width="9" height="11" stroke="#ddd"/><circle cx="13" cy="37" r="4"/><path d="M10 40 L6 45"/><circle cx="9" cy="59" r="1.8"/><circle cx="9" cy="70" r="1.8"/><circle cx="16" cy="63" r="1.8"/><path d="M9 61V68M16 65Q16 68 10 69"/><path d="M8 83 L17 89 L8 95Z"/><rect x="5" y="110" width="6" height="6"/><rect x="11" y="110" width="6" height="6"/><rect x="5" y="116" width="6" height="6"/><rect x="12" y="104" width="6" height="6"/><path d="M9 133 V139 L5 147 H17 L13 139 V133"/><ellipse cx="11" cy="166" rx="7" ry="3"/><ellipse cx="11" cy="166" rx="3" ry="7"/><circle cx="11" cy="232" r="6"/><circle cx="11" cy="230" r="2"/><circle cx="11" cy="257" r="5"/><circle cx="11" cy="257" r="2"/></svg></div>
 <div class="ex"><div class="h">EXPLORER&nbsp;&nbsp;&nbsp;&nbsp;&nbsp;&nbsp;&nbsp;&nbsp;&nbsp;&nbsp;&nbsp;&nbsp;&nbsp;&nbsp;&nbsp;&nbsp; ···</div><div class="m">˅ MYAPP</div>
  <div class="el" style="top:37px"><div style="padding-left:16px"><span class="hi">&lt;&gt;</span>404.html</div><div style="padding-left:16px"><span class="hi">&lt;&gt;</span>all_members.html</div><div style="padding-left:16px"><span class="hi">&lt;&gt;</span>details.html</div><div style="padding-left:16px"><span class="hi">&lt;&gt;</span>main.html</div><div style="padding-left:16px"><span class="hi">&lt;&gt;</span>master.html</div><div style="padding-left:16px"><span class="hi">&lt;&gt;</span>myfirst.html</div><div class="sel" style="padding-left:16px"><span class="hi">&lt;&gt;</span>template.html</div><div style="padding-left:12px"><span class="py">◆</span>__init__.py</div><div style="padding-left:12px"><span class="py">◆</span>admin.py</div><div style="padding-left:12px"><span class="py">◆</span>apps.py</div><div style="padding-left:12px"><span class="py">◆</span>models.py</div><div style="padding-left:12px"><span class="py">◆</span>tests.py</div><div style="padding-left:12px"><span class="py">◆</span>urls.py</div><div style="padding-left:12px"><span class="py">◆</span>views.py</div><div style="padding-left:10px">›&nbsp; myapp</div><div style="padding-left:10px">≡&nbsp; db.sqlite3</div><div style="padding-left:8px"><span class="py">◆</span>manage.py</div></div>
  <div class="ol" style="top:249px">›&nbsp; OUTLINE</div><div class="ol" style="top:261px">›&nbsp; TIMELINE</div></div>
 <div class="tabs" style="left:106px"><div class="tab" style="left:0px"><span class="py">◆</span>admin.py</div><div class="tab act" style="left:56px"><span class="hi">&lt;&gt;</span>template.html&nbsp; ✕</div><div class="tab" style="left:128px"><span class="py">◆</span>views.py</div><div class="rt">▷ ◫ ···</div></div>
 <div class="bc" style="left:114px">hello &gt; templates &gt; <span class="hi">&lt;&gt;</span>template.html</div>
 <pre class="n" style="left:106px;top:48px">1
2
3
4
5
6
7
8
9
10
11
12</pre>
 <pre style="left:139px;top:48px"><span class="g">&lt;!</span><span class="k">DOCTYPE</span> <span class="v">html</span><span class="g">&gt;</span>
<span class="g">&lt;</span><span class="k">html</span><span class="g">&gt;</span>
<span class="g">&lt;</span><span class="k">body</span><span class="g">&gt;</span>
    <span class="g">&lt;</span><span class="k">ul</span><span class="g">&gt;</span>
        <span class="y">{%</span> <span class="q">for</span> <span class="v">x</span> <span class="q">in</span> <span class="v">mymembers</span> <span class="y">%}</span>
        <span class="g">&lt;</span><span class="k">li</span><span class="g">&gt;</span><span class="y">{{</span> <span class="s">x.firstname</span><span class="y">}}</span><span class="g">&lt;/</span><span class="k">li</span><span class="g">&gt;</span>
        <span class="y">{%</span> <span class="q">endfor</span> <span class="y">%}</span>
    <span class="g">&lt;/</span><span class="k">ul</span><span class="g">&gt;</span>

    <span class="g">&lt;</span><span class="k">p</span><span class="g">&gt;</span>In views.py you can see how to import and fetch members from the database.<span class="g">&lt;/</span><span class="k">p</span><span class="g">&gt;</span>

</pre>
 <div class="term" style="left:106px">
  <div class="tt" style="left:9px">PROBLEMS&nbsp;&nbsp;&nbsp;&nbsp; OUTPUT&nbsp;&nbsp;&nbsp;&nbsp; DEBUG CONSOLE&nbsp;&nbsp;&nbsp;&nbsp; <b>TERMINAL</b>&nbsp;&nbsp;&nbsp;&nbsp; PORTS</div>
  <div class="tt" style="right:8px">+ ˅&nbsp; ···&nbsp; ✕</div>
  <pre class="tm" style="left:9px;top:20px">PS C:\Django-Project\myapp&gt; py manage.py runserver
Watching for file changes with StatReloader
Performing system checks...

System check identified no issues (0 silenced).
December 07, 2023 - 15:59:13
Django version 4.2.7, using settings 'myapp.settings'
Starting development server at http://127.0.0.1:8000/
Quit the server with CTRL-BREAK.

<span style="background:#ccc">&nbsp;</span></pre>
  <div class="tl" style="top:12px"><div>⊡ powershell</div><div>⊡ py</div><div>⊡ py</div><div>⊡ py</div><div>⊡ py</div><div style="background:#37373d">⊡ py</div></div>
 </div>
 <div class="dot" style="left:228px;top:249px"></div>
 <div class="st"><span class="rm">⋊</span><span style="left:20px">⊗0 ⚠0&nbsp;&nbsp; ⅄0</span><span style="left:317px">Ln 10, Col 80&nbsp;&nbsp;&nbsp; Spaces: 2&nbsp;&nbsp;&nbsp; UTF-8&nbsp;&nbsp;&nbsp; CRLF&nbsp;&nbsp;&nbsp; Django HTML&nbsp;&nbsp;&nbsp; ⊛ Go Live</span></div>
</div>

</body></html>
